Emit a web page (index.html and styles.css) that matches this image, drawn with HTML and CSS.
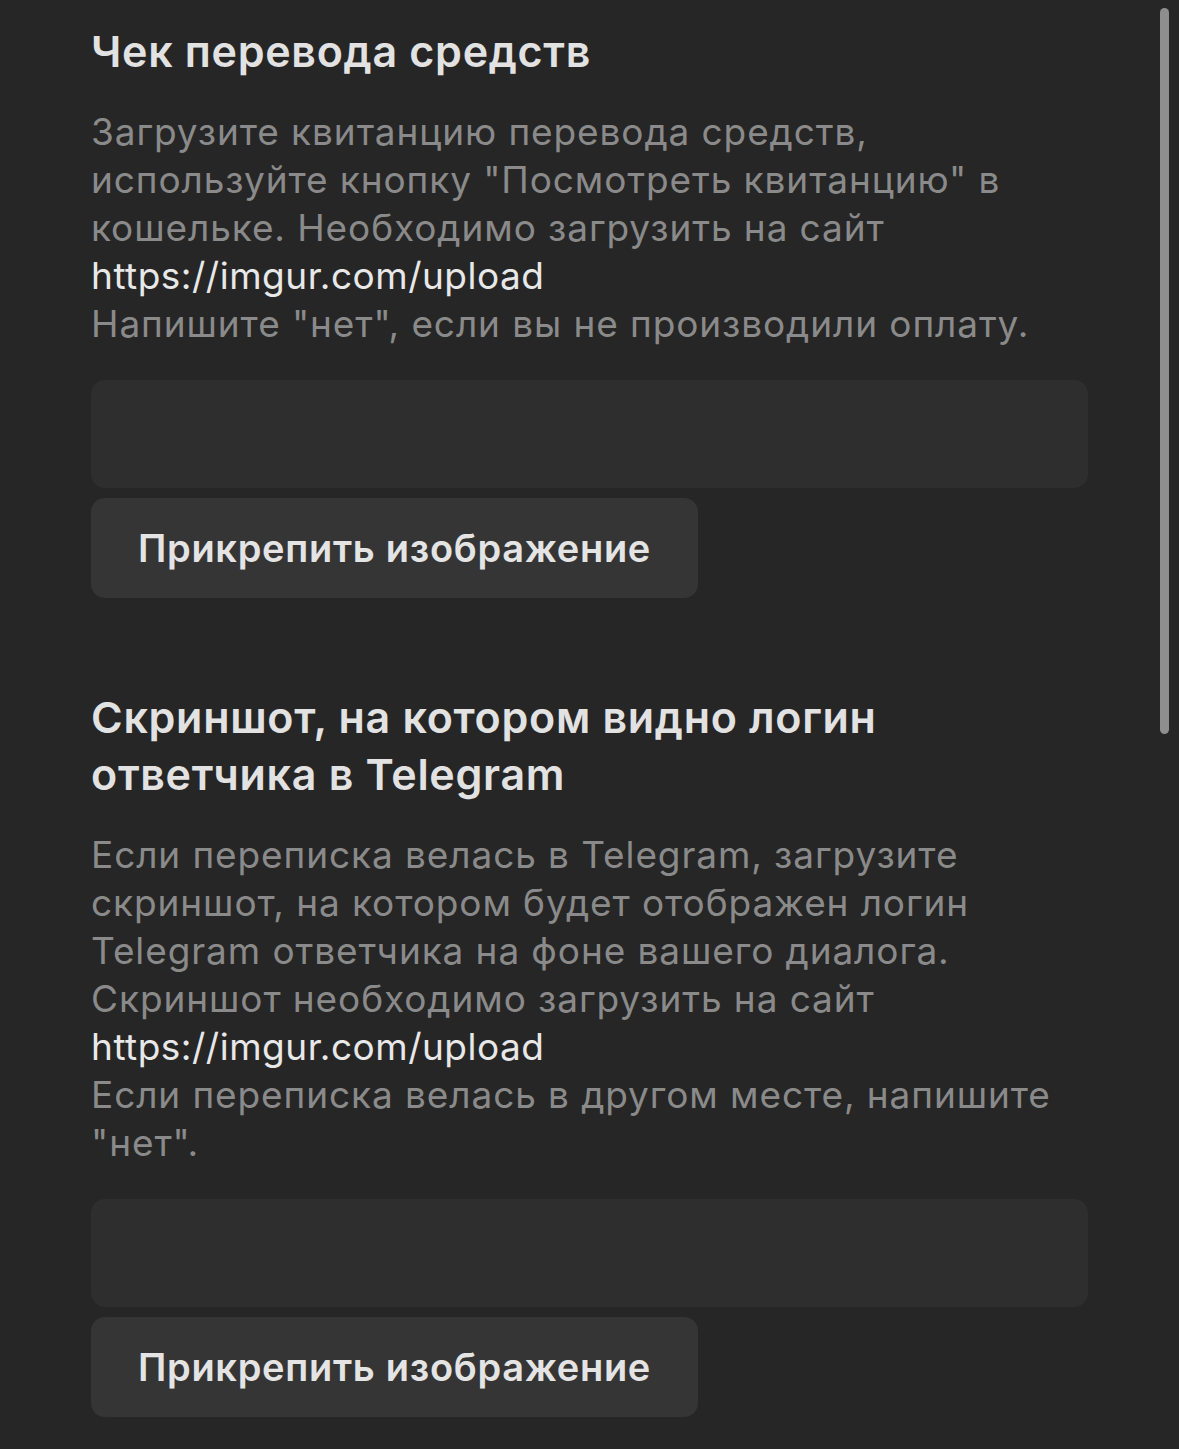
FILE: index.html
```html
<!DOCTYPE html><html lang='ru'>
	<head>
		<meta charset='utf-8'>
		<title>Форма</title>
		<link rel="stylesheet" href="styles.css">
	</head>
	<body>
		<div class='page'>
			<!-- receipt -->
			<section class='field'>
				<h2 class='fieldTitle'>Чек перевода средств</h2>
				<p class='fieldDesc'>Загрузите квитанцию перевода средств, используйте кнопку "Посмотреть квитанцию" в кошельке. Необходимо загрузить на сайт<br><span class='link'>https://imgur.com/upload</span><br>Напишите "нет", если вы не производили оплату.</p>
				<div class='inputBox'></div>
				<button class='attachB' type='button'>Прикрепить изображение</button>
			</section>
			<!-- telegram screenshot -->
			<section class='field'>
				<h2 class='fieldTitle'>Скриншот, на котором видно логин ответчика в Telegram</h2>
				<p class='fieldDesc'>Если переписка велась в Telegram, загрузите скриншот, на котором будет отображен логин Telegram ответчика на фоне вашего диалога. Скриншот необходимо загрузить на сайт<br><span class='link'>https://imgur.com/upload</span><br>Если переписка велась в другом месте, напишите "нет".</p>
				<div class='inputBox'></div>
				<button class='attachB' type='button'>Прикрепить изображение</button>
			</section>
		</div>
		<div class='scrollThumb'></div>
	</body>
</html>
```

FILE: styles.css
```css
html,body{
	margin:0;
	background:#262626;
	height:100%;
	overflow:hidden;
}
body{
	font-family:Inter,"Noto Sans",sans-serif;
}
.page{
	width:997px;
	padding:23px 0 0 91px;
}
.field{
	display:flex;
	flex-direction:column;
	align-items:flex-start;
}
.field+.field{
	margin-top:91px;
}
.fieldTitle{
	margin:0;
	font-size:43px;
	line-height:57px;
	font-weight:600;
	letter-spacing:0.7px;
	color:#e2e2e2;
	width:860px;
}
.fieldDesc{
	margin:28px 0 0 0;
	font-size:37px;
	line-height:48px;
	color:#8a8a8a;
	letter-spacing:0.9px;
}
.link{
	color:#e8e8e8;
	letter-spacing:0.5px;
}
.inputBox{
	margin-top:32px;
	width:997px;
	height:108px;
	background:#2e2e2e;
	border-radius:14px;
}
.attachB{
	margin-top:10px;
	width:607px;
	height:100px;
	border:none;
	border-radius:14px;
	background:#353535;
	color:#e4e4e4;
	font-family:Inter,"Noto Sans",sans-serif;
	font-size:38px;
	font-weight:600;
	letter-spacing:0.7px;
	padding:0;
}
.scrollThumb{
	position:fixed;
	top:8px;
	right:10px;
	width:9px;
	height:726px;
	border-radius:5px;
	background:#8e8e8e;
}
```
